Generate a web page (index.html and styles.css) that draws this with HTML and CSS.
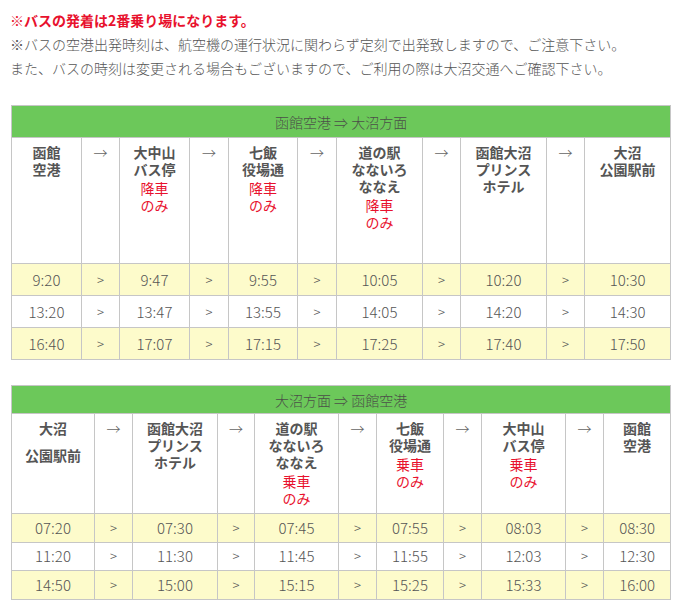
FILE: index.html
```html
<!DOCTYPE html>
<html lang="ja">
<head>
<meta charset="utf-8">
<title>バス時刻表</title>
<link rel="stylesheet" href="styles.css">
</head>
<body>
<div class="page">
  <p class="notes"><span class="alert">※バスの発着は2番乗り場になります。</span><br>※バスの空港出発時刻は、航空機の運行状況に関わらず定刻で出発致しますので、ご注意下さい。<br>また、バスの時刻は変更される場合もございますので、ご利用の際は大沼交通へご確認下さい。</p>

  <table class="timetable t1">
    <colgroup>
      <col class="w70"><col class="w38"><col class="w70"><col class="w39"><col class="w69"><col class="w39"><col class="w86"><col class="w38"><col class="w86"><col class="w38"><col class="w86">
    </colgroup>
    <thead>
      <tr class="title-row"><th colspan="11" class="title">函館空港 ⇒ 大沼方面</th></tr>
      <tr class="stops">
        <th>函館<br>空港</th>
        <th class="arr">→</th>
        <th>大中山<br>バス停<br><span class="only">降車<br>のみ</span></th>
        <th class="arr">→</th>
        <th>七飯<br>役場通<br><span class="only">降車<br>のみ</span></th>
        <th class="arr">→</th>
        <th>道の駅<br>なないろ<br>ななえ<br><span class="only">降車<br>のみ</span></th>
        <th class="arr">→</th>
        <th>函館大沼<br>プリンス<br>ホテル</th>
        <th class="arr">→</th>
        <th>大沼<br>公園駅前</th>
      </tr>
    </thead>
    <tbody>
      <tr class="hl"><td>9:20</td><td class="gt">&gt;</td><td>9:47</td><td class="gt">&gt;</td><td>9:55</td><td class="gt">&gt;</td><td>10:05</td><td class="gt">&gt;</td><td>10:20</td><td class="gt">&gt;</td><td>10:30</td></tr>
      <tr><td>13:20</td><td class="gt">&gt;</td><td>13:47</td><td class="gt">&gt;</td><td>13:55</td><td class="gt">&gt;</td><td>14:05</td><td class="gt">&gt;</td><td>14:20</td><td class="gt">&gt;</td><td>14:30</td></tr>
      <tr class="hl"><td>16:40</td><td class="gt">&gt;</td><td>17:07</td><td class="gt">&gt;</td><td>17:15</td><td class="gt">&gt;</td><td>17:25</td><td class="gt">&gt;</td><td>17:40</td><td class="gt">&gt;</td><td>17:50</td></tr>
    </tbody>
  </table>

  <table class="timetable t2">
    <colgroup>
      <col class="w83"><col class="w38"><col class="w85"><col class="w37"><col class="w84"><col class="w38"><col class="w67"><col class="w38"><col class="w84"><col class="w38"><col class="w67">
    </colgroup>
    <thead>
      <tr class="title-row"><th colspan="11" class="title">大沼方面 ⇒ 函館空港</th></tr>
      <tr class="stops">
        <th><span class="gap-line">大沼</span><br>公園駅前</th>
        <th class="arr">→</th>
        <th>函館大沼<br>プリンス<br>ホテル</th>
        <th class="arr">→</th>
        <th>道の駅<br>なないろ<br>ななえ<br><span class="only">乗車<br>のみ</span></th>
        <th class="arr">→</th>
        <th>七飯<br>役場通<br><span class="only">乗車<br>のみ</span></th>
        <th class="arr">→</th>
        <th>大中山<br>バス停<br><span class="only">乗車<br>のみ</span></th>
        <th class="arr">→</th>
        <th>函館<br>空港</th>
      </tr>
    </thead>
    <tbody>
      <tr class="hl"><td>07:20</td><td class="gt">&gt;</td><td>07:30</td><td class="gt">&gt;</td><td>07:45</td><td class="gt">&gt;</td><td>07:55</td><td class="gt">&gt;</td><td>08:03</td><td class="gt">&gt;</td><td>08:30</td></tr>
      <tr><td>11:20</td><td class="gt">&gt;</td><td>11:30</td><td class="gt">&gt;</td><td>11:45</td><td class="gt">&gt;</td><td>11:55</td><td class="gt">&gt;</td><td>12:03</td><td class="gt">&gt;</td><td>12:30</td></tr>
      <tr class="hl"><td>14:50</td><td class="gt">&gt;</td><td>15:00</td><td class="gt">&gt;</td><td>15:15</td><td class="gt">&gt;</td><td>15:25</td><td class="gt">&gt;</td><td>15:33</td><td class="gt">&gt;</td><td>16:00</td></tr>
    </tbody>
  </table>
</div>
</body>
</html>
```

FILE: styles.css
```css
html, body {
  margin: 0;
  padding: 0;
  background: #ffffff;
}

body {
  font-family: "Noto Sans CJK JP", "Noto Sans", sans-serif;
  color: #555555;
}

.page {
  padding: 8px 19px 0 10px;
}

.notes {
  margin: 0;
  font-size: 14px;
  line-height: 24px;
  color: #555555;
  font-weight: 300;
}

.alert {
  color: #e8112d;
  font-weight: bold;
}

.timetable {
  border-collapse: collapse;
  table-layout: fixed;
  width: 660px;
  margin: 25px 0 0 1px;
}

.t2 {
  margin-top: 25px;
}

.w37 { width: 37px; }
.w38 { width: 38px; }
.w39 { width: 39px; }
.w67 { width: 67px; }
.w69 { width: 69px; }
.w70 { width: 70px; }
.w83 { width: 83px; }
.w84 { width: 84px; }
.w85 { width: 85px; }
.w86 { width: 86px; }

.timetable th,
.timetable td {
  border: 1px solid #c6c6c6;
  padding: 0;
  text-align: center;
}

.title {
  background: #6cc85a;
  color: #4b4f48;
  font-size: 14px;
  font-weight: 300;
  line-height: 20px;
}

.t1 .title-row { height: 32px; }
.t2 .title-row { height: 28px; }

.stops th {
  vertical-align: top;
  font-size: 14px;
  font-weight: bold;
  line-height: 17px;
  color: #555555;
  padding-top: 6px;
}

.t1 .stops { height: 126px; }
.t2 .stops { height: 100px; }

.stops th.arr {
  font-weight: 300;
  color: #666666;
}

.only {
  color: #e8112d;
  font-weight: normal;
  display: inline-block;
  margin-top: 2px;
}

.gap-line {
  display: inline-block;
  margin-bottom: 10px;
}

.timetable td {
  font-size: 15px;
  font-weight: 300;
  color: #555555;
  line-height: 20px;
}

.timetable td.gt {
  font-size: 13px;
}

.t1 tbody tr { height: 32px; }
.t2 tbody tr { height: 28.5px; }

.hl td {
  background: #fdfbcb;
}
```
